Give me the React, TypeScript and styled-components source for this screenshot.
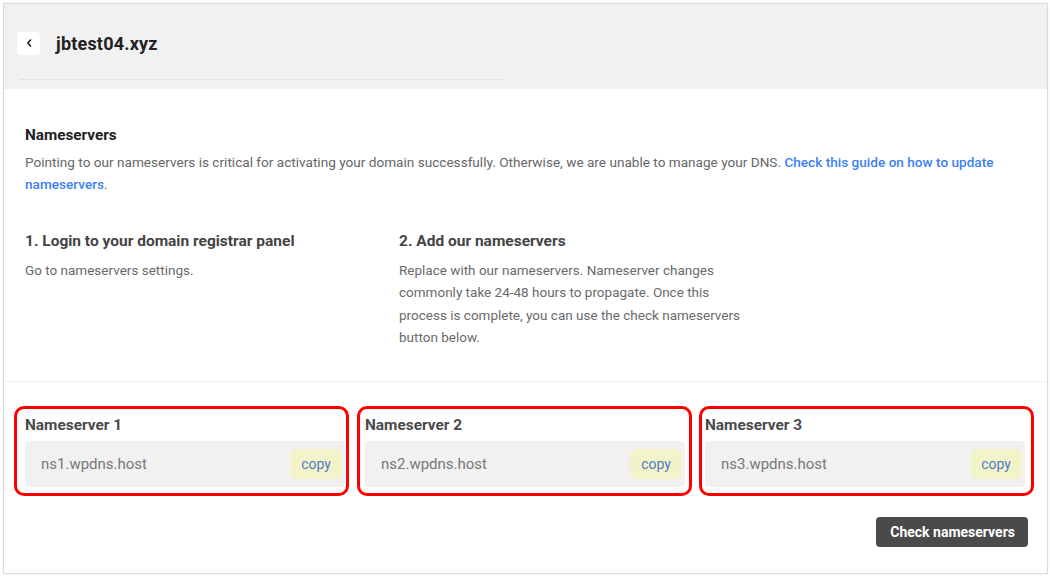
import styled, { createGlobalStyle } from 'styled-components';

const GlobalStyle = createGlobalStyle`
  html, body {
    margin: 0;
    padding: 0;
    background: #ffffff;
    font-family: Roboto, "Liberation Sans", Arial, sans-serif;
  }
`;

const Frame = styled.div`
  box-sizing: border-box;
  margin: 3px;
  width: 1045px;
  height: 571px;
  border: 1px solid #d9d9d9;
  box-shadow: 0 0 2px rgba(0, 0, 0, 0.08);
  background: #ffffff;
  display: flex;
  flex-direction: column;
`;

const Header = styled.header`
  background: #f1f1f1;
  padding: 27px 0 9px 13px;
  display: flex;
  flex-direction: column;
`;

const TitleRow = styled.div`
  display: flex;
  align-items: center;
  gap: 16px;
  height: 24px;
`;

const BackButton = styled.button`
  box-sizing: border-box;
  width: 23px;
  height: 23px;
  border: none;
  border-radius: 4px;
  background: #ffffff;
  display: flex;
  align-items: center;
  justify-content: center;
  padding: 0;
  color: #222;
  cursor: pointer;
`;

const Title = styled.h1`
  margin: 0;
  font-size: 18px;
  font-weight: 700;
  color: #222;
  letter-spacing: 0.2px;
`;

const HeaderRule = styled.div`
  width: 484px;
  height: 1px;
  margin: 24px 0 0 3px;
  background: #e3e3e3;
`;

const Body = styled.main`
  padding: 0 21px;
  display: flex;
  flex-direction: column;
`;

const SectionTitle = styled.h2`
  margin: 36px 0 0;
  font-size: 15.3px;
  line-height: 20px;
  font-weight: 700;
  color: #222;
`;

const Lead = styled.p`
  margin: 6px 0 0;
  font-size: 13.6px;
  line-height: 22px;
  color: #666;
`;

const Link = styled.a`
  color: #3d7ff2;
  font-weight: 500;
  text-decoration: none;
`;

const Steps = styled.div`
  display: grid;
  grid-template-columns: 374px 350px;
  margin-top: 36px;
`;

const StepTitle = styled.h3`
  margin: 0;
  font-size: 15.5px;
  line-height: 20px;
  font-weight: 700;
  color: #444;
`;

const StepText = styled.p`
  margin: 8px 0 0;
  font-size: 13.5px;
  line-height: 22.3px;
  color: #6a6a6a;
`;

const Rule = styled.div`
  height: 1px;
  margin: 33px -21px 0;
  background: #efefef;
`;

const Servers = styled.div`
  display: grid;
  grid-template-columns: repeat(3, 320px);
  gap: 20px;
  margin-top: 33px;
`;

const Server = styled.div`
  position: relative;
  display: flex;
  flex-direction: column;
  gap: 6px;
`;

const Highlight = styled.span<{ $left: number; $right: number }>`
  position: absolute;
  top: -9px;
  bottom: -9px;
  left: ${(p) => -p.$left}px;
  right: ${(p) => -p.$right}px;
  border: 3px solid #ff0000;
  border-radius: 10px;
  pointer-events: none;
`;

const ServerLabel = styled.div`
  font-size: 15.4px;
  line-height: 20px;
  font-weight: 700;
  color: #4a4a4a;
`;

const Field = styled.div`
  box-sizing: border-box;
  height: 46px;
  border-radius: 4px;
  background: #f1f1f1;
  display: flex;
  align-items: center;
  justify-content: space-between;
  padding: 0 3px 0 16px;
`;

const FieldValue = styled.span`
  font-size: 15px;
  color: #777;
`;

const CopyButton = styled.button`
  width: 52px;
  height: 30px;
  border: none;
  border-radius: 6px;
  background: #f3f3c9;
  color: #4d7cc4;
  font-family: inherit;
  font-size: 14px;
  padding: 0;
  cursor: pointer;
`;

const Actions = styled.div`
  display: flex;
  justify-content: flex-end;
  margin: 30px -2px 0 0;
`;

const CheckButton = styled.button`
  height: 30px;
  padding: 0 13px 0 14px;
  border: none;
  border-radius: 4px;
  background: #4a4a4a;
  color: #ffffff;
  font-family: inherit;
  font-size: 14px;
  font-weight: 700;
  cursor: pointer;
`;

const servers = [
  { name: 'Nameserver 1', host: 'ns1.wpdns.host', left: 11, right: 4 },
  { name: 'Nameserver 2', host: 'ns2.wpdns.host', left: 8, right: 7 },
  { name: 'Nameserver 3', host: 'ns3.wpdns.host', left: 6, right: 9 },
];

export default function App() {
  return (
    <>
      <GlobalStyle />
      <Frame>
        <Header>
          <TitleRow>
            <BackButton aria-label="Back">
              <svg width="6" height="8" viewBox="0 0 6 8">
                <path
                  d="M4.5 1 L1.8 4 L4.5 7"
                  fill="none"
                  stroke="#222"
                  strokeWidth="1.6"
                  strokeLinecap="round"
                  strokeLinejoin="round"
                />
              </svg>
            </BackButton>
            <Title>jbtest04.xyz</Title>
          </TitleRow>
          <HeaderRule />
        </Header>
        <Body>
          <SectionTitle>Nameservers</SectionTitle>
          <Lead>
            Pointing to our nameservers is critical for activating your domain
            successfully. Otherwise, we are unable to manage your DNS.{' '}
            <Link href="#">Check this guide on how to update nameservers</Link>.
          </Lead>
          <Steps>
            <div>
              <StepTitle>1. Login to your domain registrar panel</StepTitle>
              <StepText>Go to nameservers settings.</StepText>
            </div>
            <div>
              <StepTitle>2. Add our nameservers</StepTitle>
              <StepText>
                Replace with our nameservers. Nameserver changes commonly take
                24-48 hours to propagate. Once this process is complete, you can
                use the check nameservers button below.
              </StepText>
            </div>
          </Steps>
          <Rule />
          <Servers>
            {servers.map((s) => (
              <Server key={s.name}>
                <Highlight $left={s.left} $right={s.right} />
                <ServerLabel>{s.name}</ServerLabel>
                <Field>
                  <FieldValue>{s.host}</FieldValue>
                  <CopyButton>copy</CopyButton>
                </Field>
              </Server>
            ))}
          </Servers>
          <Actions>
            <CheckButton>Check nameservers</CheckButton>
          </Actions>
        </Body>
      </Frame>
    </>
  );
}
